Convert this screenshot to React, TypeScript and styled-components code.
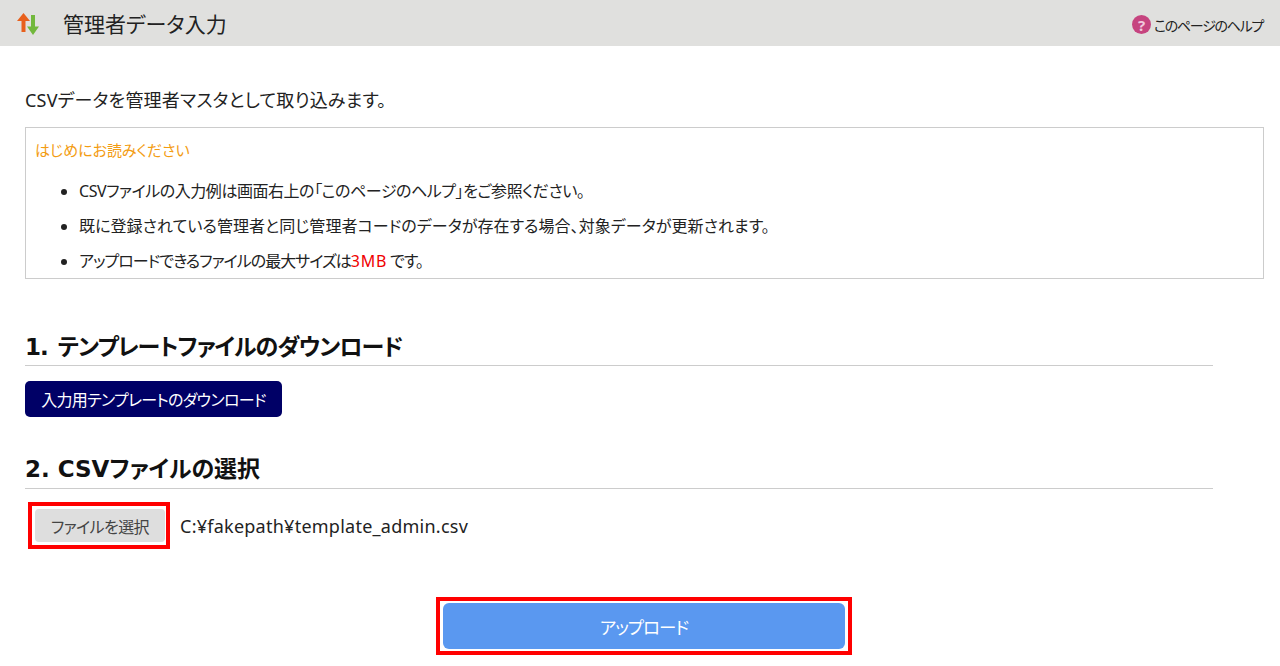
import React from "react";
import styled, { createGlobalStyle } from "styled-components";

const GlobalStyle = createGlobalStyle`
  html, body {
    margin: 0;
    padding: 0;
    background: #fff;
  }
  body {
    font-family: "Noto Sans", "Noto Sans CJK JP", sans-serif;
    font-feature-settings: "palt";
    color: #222;
    font-size: 16px;
  }
  button {
    font-feature-settings: "palt";
  }
  * {
    box-sizing: border-box;
  }
`;

const App: React.FC = () => {
  return (
    <>
      <GlobalStyle />
      <Header>
        <TitleGroup>
          <svg width="26" height="24" viewBox="0 0 26 24">
            <path d="M9.5 2 L16 10 L11.5 10 L11.5 21 L7.5 21 L7.5 10 L3 10 Z" fill="#e8601c" />
            <path d="M19 24 L25 15.5 L21 15.5 L21 4 L17 4 L17 15.5 L13 15.5 Z" fill="#72b83c" />
          </svg>
          <Title>管理者データ入力</Title>
        </TitleGroup>
        <HelpLink>
          <HelpIcon>?</HelpIcon>
          このページのヘルプ
        </HelpLink>
      </Header>
      <Main>
        <Intro>CSVデータを管理者マスタとして取り込みます。</Intro>
        <NoticeBox>
          <NoticeTitle>はじめにお読みください</NoticeTitle>
          <NoticeList>
            <NoticeItem $tracking={-0.45}>CSVファイルの入力例は画面右上の「このページのヘルプ」をご参照ください。</NoticeItem>
            <NoticeItem $tracking={0.06}>既に登録されている管理者と同じ管理者コードのデータが存在する場合、対象データが更新されます。</NoticeItem>
            <NoticeItem $tracking={-0.98}>
              アップロードできるファイルの最大サイズは<Red>3MB</Red>です。
            </NoticeItem>
          </NoticeList>
        </NoticeBox>
        <SectionHeading $tight>1. テンプレートファイルのダウンロード</SectionHeading>
        <DownloadButton>入力用テンプレートのダウンロード</DownloadButton>
        <SectionHeading $second>2. CSVファイルの選択</SectionHeading>
        <FileRow>
          <FileHighlight>
            <FileButton>ファイルを選択</FileButton>
          </FileHighlight>
          <FileName>C:¥fakepath¥template_admin.csv</FileName>
        </FileRow>
        <UploadRow>
          <UploadHighlight>
            <UploadButton>アップロード</UploadButton>
          </UploadHighlight>
        </UploadRow>
      </Main>
    </>
  );
};

export default App;

const Header = styled.header`
  height: 46px;
  background: #e0e0de;
  display: flex;
  align-items: center;
  justify-content: space-between;
  padding: 0 17px 0 14px;
`;

const TitleGroup = styled.div`
  display: flex;
  align-items: center;
  gap: 23px;
`;

const Title = styled.h1`
  margin: 0;
  font-size: 21px;
  font-weight: 400;
  color: #222;
`;

const HelpLink = styled.a`
  display: flex;
  align-items: center;
  gap: 3px;
  padding-top: 3px;
  font-size: 14px;
  letter-spacing: -1.3px;
  color: #222;
`;

const HelpIcon = styled.span`
  width: 19px;
  height: 19px;
  border-radius: 50%;
  background: #c6447f;
  color: #f0c8dc;
  font-size: 15px;
  font-weight: 700;
  letter-spacing: 0;
  display: flex;
  align-items: center;
  justify-content: center;
`;

const Main = styled.main`
  padding: 42px 16px 0 25px;
`;

const Intro = styled.p`
  margin: 0 0 15px;
  font-size: 18px;
  letter-spacing: 0.2px;
  line-height: 24px;
`;

const NoticeBox = styled.div`
  height: 152px;
  border: 1px solid #ccc;
  padding: 11px 9px 0;
`;

const NoticeTitle = styled.div`
  color: #f39c12;
  font-size: 15px;
  line-height: 22px;
`;

const NoticeList = styled.ul`
  margin: 19px 0 0;
  padding: 0 0 0 44px;
  font-size: 16px;
  line-height: 23px;
`;

const NoticeItem = styled.li<{ $tracking: number }>`
  margin-bottom: 12px;
  letter-spacing: ${(p) => p.$tracking}px;
`;

const Red = styled.span`
  margin-right: 3px;
  color: #f00000;
  letter-spacing: 0.75px;
`;

const SectionHeading = styled.h2<{ $second?: boolean; $tight?: boolean }>`
  width: 1188px;
  margin: ${(p) => (p.$second ? "37px 0 14px" : "53px 0 15px")};
  padding-bottom: ${(p) => (p.$second ? "4px" : "3px")};
  border-bottom: 1px solid #ccc;
  font-family: "DejaVu Sans", "Noto Sans CJK JP", sans-serif;
  font-size: 23px;
  line-height: 30px;
  font-weight: 700;
  color: #111;
  letter-spacing: ${(p) => (p.$tight ? "-1px" : "0")};
  word-spacing: ${(p) => (p.$tight ? "3px" : "0")};
`;

const DownloadButton = styled.button`
  display: block;
  width: 257px;
  height: 36px;
  padding: 0;
  border: none;
  border-radius: 5px;
  background: #000066;
  color: #fff;
  font-family: inherit;
  font-size: 16px;
  letter-spacing: -0.7px;
`;

const FileRow = styled.div`
  display: flex;
  align-items: center;
  margin: -1px 0 0 3px;
`;

const FileHighlight = styled.div`
  width: 142px;
  height: 47px;
  border: 4px solid #ff0000;
  padding: 3px 1px 3px 3px;
`;

const FileButton = styled.button`
  width: 100%;
  height: 100%;
  padding: 0;
  border: none;
  border-radius: 4px;
  background: #dedede;
  color: #444;
  font-family: inherit;
  font-size: 16px;
  letter-spacing: -0.6px;
`;

const FileName = styled.span`
  margin-left: 10px;
  font-size: 18px;
  letter-spacing: 0.25px;
`;

const UploadRow = styled.div`
  display: flex;
  justify-content: center;
  width: 1239px;
  margin-top: 48px;
`;

const UploadHighlight = styled.div`
  width: 416px;
  height: 58px;
  margin-left: -1px;
  border: 4px solid #ff0000;
  padding: 2px 3px;
`;

const UploadButton = styled.button`
  width: 100%;
  height: 100%;
  padding: 0;
  border: none;
  border-radius: 6px;
  background: #5a98f0;
  color: #fff;
  font-family: inherit;
  font-size: 17.5px;
  letter-spacing: -1px;
`;
